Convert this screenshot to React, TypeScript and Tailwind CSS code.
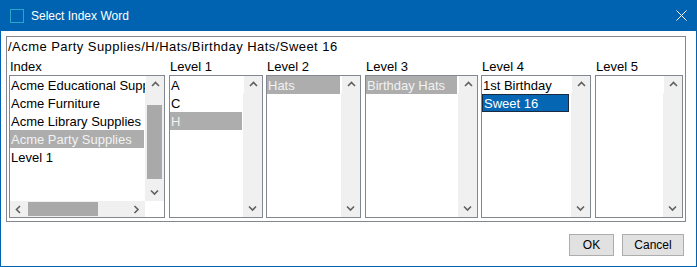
import React from "react";

type Item = { label: string; state?: "inactive" | "active" };

const columns: { title: string; width: string; items: Item[]; hscroll?: boolean }[] = [
  {
    title: "Index",
    width: "w-[156px]",
    hscroll: true,
    items: [
      { label: "Acme Educational Supplies" },
      { label: "Acme Furniture" },
      { label: "Acme Library Supplies" },
      { label: "Acme Party Supplies", state: "inactive" },
      { label: "Level 1" },
    ],
  },
  {
    title: "Level 1",
    width: "w-[94px]",
    items: [{ label: "A" }, { label: "C" }, { label: "H", state: "inactive" }],
  },
  { title: "Level 2", width: "w-[95px]", items: [{ label: "Hats", state: "inactive" }] },
  {
    title: "Level 3",
    width: "w-[113px]",
    items: [{ label: "Birthday Hats", state: "inactive" }],
  },
  {
    title: "Level 4",
    width: "w-[110px]",
    items: [{ label: "1st Birthday" }, { label: "Sweet 16", state: "active" }],
  },
  { title: "Level 5", width: "w-[88px]", items: [] },
];

function Chevron({ dir }: { dir: "up" | "down" | "left" | "right" }) {
  const pts = {
    up: "1,5 4.5,1.5 8,5",
    down: "1,1.5 4.5,5 8,1.5",
    left: "5,1 1.5,4.5 5,8",
    right: "1.5,1 5,4.5 1.5,8",
  }[dir];
  const horiz = dir === "left" || dir === "right";
  return (
    <svg width={horiz ? 7 : 9} height={horiz ? 9 : 7} viewBox={horiz ? "0 0 7 9" : "0 0 9 7"}>
      <polyline points={pts} fill="none" stroke="#606060" strokeWidth="1.6" />
    </svg>
  );
}

function VScroll({ thumb }: { thumb?: boolean }) {
  return (
    <div className="flex w-[19px] shrink-0 flex-col bg-[#f0f0f0]">
      <div className="flex h-[17px] items-center justify-center border-l border-white">
        <Chevron dir="up" />
      </div>
      <div className="flex-1">
        {thumb ? <div className="mx-[2px] mt-[12px] h-[74px] bg-[#a9a9a9]" /> : null}
      </div>
      <div className="flex h-[17px] items-center justify-center">
        <Chevron dir="down" />
      </div>
    </div>
  );
}

function ListBox({ items, hscroll }: { items: Item[]; hscroll?: boolean }) {
  return (
    <div className="flex h-[143px] flex-col border border-[#828790] bg-white">
      <div className="flex min-h-0 flex-1">
        <div className="min-w-0 flex-1 overflow-hidden pr-px">
          {items.map((item) => (
            <div
              key={item.label}
              className={
                "h-[18px] whitespace-nowrap pl-px pt-[2px] leading-[16px] " +
                (item.state === "inactive"
                  ? "bg-[#adadad] text-[#f2f2f2]"
                  : item.state === "active"
                    ? "mr-px border border-[#1b2a40] bg-[#0566b4] pl-0 pt-px text-white"
                    : "text-black")
              }
            >
              {item.label}
            </div>
          ))}
        </div>
        <VScroll thumb={hscroll} />
      </div>
      {hscroll ? (
        <div className="flex h-[16px] shrink-0">
          <div className="flex flex-1 items-center bg-[#f0f0f0]">
            <div className="flex h-full w-[17px] items-center justify-center">
              <Chevron dir="left" />
            </div>
            <div className="ml-px h-[14px] w-[70px] bg-[#a9a9a9]" />
            <div className="flex-1" />
            <div className="flex h-full w-[17px] items-center justify-center">
              <Chevron dir="right" />
            </div>
          </div>
          <div className="w-[19px] bg-white" />
        </div>
      ) : null}
    </div>
  );
}

export default function App() {
  return (
    <div className="flex h-[267px] w-[697px] flex-col bg-white font-['Liberation_Sans',Arial,sans-serif] text-[13px] text-black">
      <div className="flex h-[31px] shrink-0 items-center bg-[#0063b1] text-white">
        <div className="ml-[10px] h-[14px] w-[14px] border-[1.5px] border-[#2aa6c9]" />
        <span className="ml-[7px] text-[12px]">Select Index Word</span>
        <svg className="ml-auto mr-[10px]" width="11" height="11" viewBox="0 0 11 11">
          <path d="M0.5 0.5 L10.5 10.5 M10.5 0.5 L0.5 10.5" stroke="white" strokeWidth="1" />
        </svg>
      </div>

      <div className="flex flex-1 flex-col border-x border-b border-[#0063b1]">
        <div className="ml-[5px] mt-[5px] flex h-[186px] w-[680px] flex-col border border-[#828790] pt-[2px]">
          <div className="pl-px leading-[16px] tracking-[0.45px]">
            /Acme Party Supplies/H/Hats/Birthday Hats/Sweet 16
          </div>
          <div className="mt-[4px] flex pl-[2px]">
            {columns.map((col, i) => (
              <div
                key={col.title}
                className={
                  col.width +
                  " shrink-0 " +
                  (i === 0 ? "" : i === 2 || i === 4 ? "ml-[3px]" : "ml-[4px]")
                }
              >
                <div className="pl-px leading-[16px]">{col.title}</div>
                <ListBox items={col.items} hscroll={col.hscroll} />
              </div>
            ))}
          </div>
        </div>

        <div className="mr-[12px] mt-[12px] flex justify-end gap-[8px] text-[12px]">
          <button className="h-[22px] w-[45px] border border-[#adadad] bg-[#e1e1e1]">OK</button>
          <button className="h-[22px] w-[62px] border border-[#adadad] bg-[#e1e1e1]">Cancel</button>
        </div>
      </div>
    </div>
  );
}
